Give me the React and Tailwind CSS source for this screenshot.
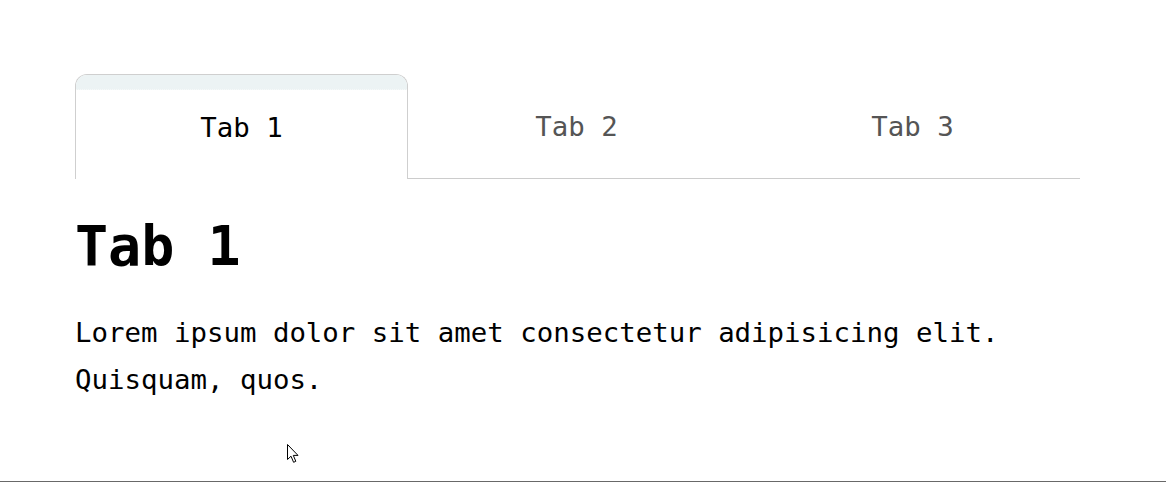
import React from "react";

export default function App() {
  const tabs = ["Tab 1", "Tab 2", "Tab 3"];
  return (
    <div
      className="relative h-[482px] w-full overflow-hidden border-b border-[#686868] bg-white text-black"
      style={{ fontFamily: '"DejaVu Sans Mono", monospace' }}
    >
      <div className="ml-[75px] w-[1005px] pt-[74px]">
        <div className="flex h-[105px] border-b border-[#cccccc]">
          {tabs.map((t, i) =>
            i === 0 ? (
              <div
                key={t}
                className="relative -mb-px flex h-[105px] w-[333px] flex-col overflow-hidden rounded-t-[12px] border border-b-0 border-[#cfcfcf] bg-white"
              >
                <div className="h-[15px] shrink-0 border-b border-dotted border-[#f6f9f9] bg-[#ecf3f4]" />
                <div className="flex flex-1 items-center justify-center pb-[13px] text-[27.4px] leading-none text-black">
                  {t}
                </div>
              </div>
            ) : (
              <div
                key={t}
                className={`flex h-[104px] items-center justify-center pt-[2px] text-[27.4px] leading-none text-[#555555] ${
                  i === 1 ? "w-[337px]" : "w-[335px]"
                }`}
              >
                {t}
              </div>
            )
          )}
        </div>
        <h1 className="mt-[31px] text-[55px] font-bold leading-[72px]">Tab 1</h1>
        <p className="mt-[27px] text-[27.4px] leading-[47px]">
          Lorem ipsum dolor sit amet consectetur adipisicing elit.
          <br />
          Quisquam, quos.
        </p>
      </div>
      <svg
        className="absolute left-[287px] top-[444px]"
        width="13"
        height="20"
        viewBox="0 0 13 20"
      >
        <path
          d="M0.5 0.5 L0.5 15.5 L4 12.2 L6.6 18.3 L8.8 17.3 L6.3 11.4 L11 11.4 Z"
          fill="white"
          stroke="black"
          strokeWidth="1"
          strokeLinejoin="miter"
        />
      </svg>
    </div>
  );
}
